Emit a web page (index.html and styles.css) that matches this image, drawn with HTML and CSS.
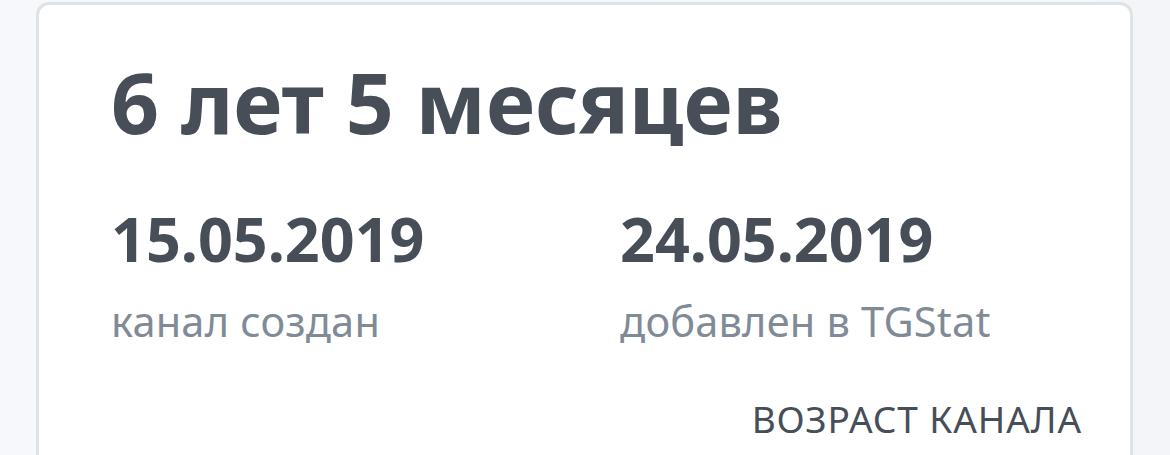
FILE: index.html
```html
<!DOCTYPE html>
<html lang="ru">
<head>
<meta charset="utf-8">
<title>Возраст канала</title>
<link rel="stylesheet" href="styles.css">
</head>
<body>
  <div class="card">
    <div class="card-body">
      <h2 class="age">6 лет 5 месяцев</h2>
      <div class="dates">
        <div class="date">
          <div class="date-value">15.05.2019</div>
          <div class="date-label">канал создан</div>
        </div>
        <div class="date">
          <div class="date-value">24.05.2019</div>
          <div class="date-label">добавлен в TGStat</div>
        </div>
      </div>
      <div class="card-caption">ВОЗРАСТ КАНАЛА</div>
    </div>
  </div>
</body>
</html>
```

FILE: styles.css
```css
html, body {
  margin: 0;
  padding: 0;
}

body {
  background: linear-gradient(90deg, #f7f8fb 0%, #f3f5f8 100%);
  font-family: "Noto Sans", "Open Sans", sans-serif;
  color: #474e58;
  height: 455px;
  overflow: hidden;
}

.card {
  margin: 2px 37px 0 36px;
  background: #ffffff;
  border: 3px solid #dee3e7;
  border-bottom: none;
  border-radius: 13px 13px 0 0;
  height: 460px;
}

.card-body {
  padding: 37px 48px 0 72px;
}

.age {
  margin: 0;
  font-size: 84px;
  font-weight: 700;
  line-height: 120px;
}

.dates {
  display: grid;
  grid-template-columns: 509px 1fr;
  margin-top: 39px;
}

.date-value {
  font-size: 61px;
  font-weight: 700;
  line-height: 76px;
}

.date-label {
  margin-top: 19px;
  font-size: 41.5px;
  line-height: 50px;
  letter-spacing: 0.2px;
  color: #808b97;
}

.card-caption {
  margin-top: 51px;
  text-align: right;
  font-size: 37px;
  line-height: 44px;
  letter-spacing: 0.9px;
  color: #474e58;
}
```
